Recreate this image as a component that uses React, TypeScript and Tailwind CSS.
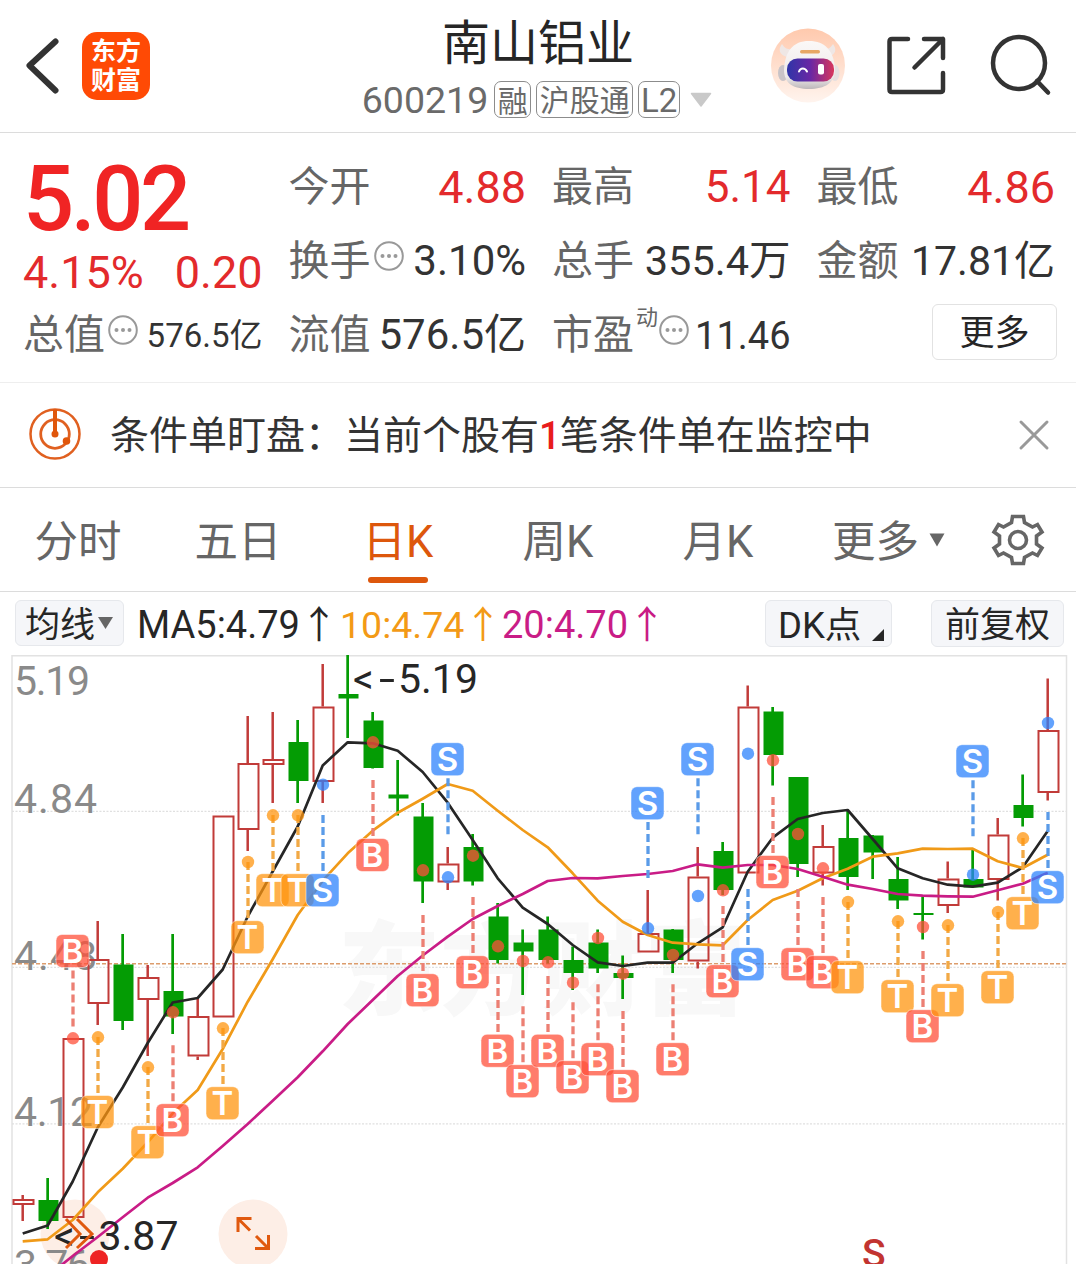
import { useState } from 'react';

const UP = '#c13b39';
const DOWN = '#049c04';

// [direction, high, bodyTop, bodyBottom, low]
type Candle = ['u' | 'd', number, number, number, number];

const candles: Candle[] = [
  ['u', 1195, 1199, 1205, 1221],
  ['d', 1178, 1200, 1221, 1229],
  ['u', 1038, 1038, 1218, 1218],
  ['u', 921, 959, 1004, 1025],
  ['d', 934, 964.5, 1021, 1030],
  ['u', 965, 977, 1000, 1056],
  ['d', 934, 991, 1016.5, 1034],
  ['u', 999, 1016, 1056.5, 1060],
  ['u', 815.5, 815.5, 1017.5, 1017.5],
  ['u', 716, 763, 830, 851],
  ['u', 712, 759, 765, 803],
  ['d', 720, 742, 781, 803],
  ['u', 664, 706.5, 782, 803],
  ['d', 655, 694, 698.5, 738],
  ['d', 712, 720.5, 768, 768.5],
  ['d', 760, 794.5, 798.5, 815.5],
  ['d', 803, 816.5, 881.5, 903],
  ['u', 847, 863.5, 882.5, 890],
  ['d', 834, 847, 881.5, 885.5],
  ['d', 903, 916.5, 960, 963.5],
  ['d', 929.5, 942.5, 951.5, 995],
  ['d', 916.5, 929.5, 960, 963.5],
  ['d', 946.5, 960, 973, 990],
  ['d', 929.5, 942.5, 968.5, 973],
  ['d', 955.5, 973, 978, 999],
  ['u', 890, 933, 952.5, 952.5],
  ['d', 929, 929.5, 960, 973],
  ['u', 847, 876.5, 961.5, 968.5],
  ['d', 842, 851, 890, 895],
  ['u', 685.5, 706.5, 873.5, 873.5],
  ['d', 707, 711.5, 755, 785.5],
  ['d', 777, 777, 864, 877],
  ['u', 825, 846, 873.5, 885.5],
  ['d', 811, 838, 877, 890],
  ['d', 835, 835.5, 852.5, 879],
  ['d', 857, 879, 900.5, 909],
  ['d', 896.5, 913, 915, 939.5],
  ['u', 861.5, 878.5, 906, 913],
  ['d', 849, 879, 887.5, 887.5],
  ['u', 818, 834.5, 880, 900.5],
  ['d', 774.5, 805, 818, 826.5],
  ['u', 678.5, 730, 793, 800.5],
];

const ma5 = [
  1233.5, 1225.5, 1181.5, 1127.5, 1087.5, 1043, 1002.5, 998, 969.5, 916.5, 871.5, 826.5, 765.5, 742.3,
  743.3, 750.7, 772, 802.7, 840, 878.3, 907.7, 924, 945, 962.3, 966, 962.7, 962.7, 943.3, 927.3, 871.7,
  837.7, 819, 813, 810, 839, 868.3, 878.3, 884.7, 886.7, 882.7, 867.3, 831,
];

const ma10 = [
  1241.3, 1239.3, 1220, 1192.3, 1168.7, 1142.3, 1113.3, 1090, 1049, 1001.7, 959.3, 915, 880.7, 853.3,
  830.7, 812.7, 798.7, 784, 790.7, 810.7, 830, 847.3, 873.3, 900.7, 921.7, 935, 942.7, 944.3, 945.3, 920,
  900, 890.7, 878.3, 868.7, 856.7, 853.3, 848.7, 849, 848.7, 861.3, 868, 854.7,
];

const ma20 = [
  1296, 1276, 1256, 1237, 1217.3, 1197.7, 1183, 1167.3, 1146, 1124, 1100.7, 1077.3, 1051.3, 1024, 1000,
  976, 955.5, 936.7, 919, 906, 894, 881, 878, 878.3, 876, 874, 871, 864.3, 867.7, 865, 865, 869, 876.7,
  884.7, 889, 894, 895.7, 896.3, 896.7, 890.3, 883.7, 872.7,
];

// [index, letter, dot y, dashes start y, tag center y]
type Marker = [number, 'B' | 'S' | 'T', number, number, number];

const markers: Marker[] = [
  [2, 'B', 1038.3, 970.5, 951],
  [3, 'T', 1037.3, 1037, 1112],
  [5, 'T', 1067.3, 1067, 1142.2],
  [6, 'B', 1012.3, 1045.3, 1120.2],
  [8, 'T', 1028.3, 1028, 1103.2],
  [9, 'T', 862, 862, 937.2],
  [10, 'T', 815.3, 815, 890.2],
  [11, 'T', 815.3, 815, 890.2],
  [12, 'S', 784.7, 815, 890.2],
  [14, 'B', 742.3, 780, 855],
  [16, 'B', 870.3, 915, 990.2],
  [17, 'S', 877.3, 778.3, 759.2],
  [18, 'B', 855.7, 897, 972.2],
  [19, 'B', 946.3, 976, 1050.8],
  [20, 'B', 961, 1006.3, 1081.2],
  [21, 'B', 962.3, 976, 1050.8],
  [22, 'B', 982.7, 1002.3, 1077.2],
  [23, 'B', 938, 984.3, 1059.2],
  [24, 'B', 973.7, 1011, 1086.2],
  [25, 'S', 928.3, 822, 803.2],
  [26, 'B', 955, 984.3, 1059.2],
  [27, 'S', 896, 778.3, 759.2],
  [28, 'B', 890.3, 906, 981.2],
  [29, 'S', 753.7, 889, 964.2],
  [30, 'B', 760.3, 797, 872],
  [31, 'B', 834, 889, 964.2],
  [32, 'B', 868.3, 897, 972.2],
  [33, 'T', 902, 902, 977.2],
  [35, 'T', 921.3, 921, 996.2],
  [36, 'B', 927, 951, 1026.2],
  [37, 'T', 925.3, 925, 1000.2],
  [38, 'S', 874.7, 780.3, 761.2],
  [39, 'T', 912, 912, 987.2],
  [40, 'T', 838.3, 838, 913.2],
  [41, 'S', 723, 812, 887.2],
];

const markerFill = { B: '#ff503a', S: '#2e83fc', T: '#ff9510' };
const markerDash = { B: '#ec7f73', S: '#5a9be8', T: '#f2a945' };

const xAt = (i: number) => 22.7 + i * 25;
const toPoints = (values: number[]) => values.map((y, i) => `${xAt(i)},${y}`).join(' ');

function MoreDots() {
  return (
    <svg width="30" height="30" viewBox="0 0 30 30" className="-mt-2 ml-[3px] shrink-0">
      <circle cx="15" cy="15" r="13.8" fill="none" stroke="#999" strokeWidth="2" />
      <circle cx="8.5" cy="15" r="2" fill="#999" />
      <circle cx="15" cy="15" r="2" fill="#999" />
      <circle cx="21.5" cy="15" r="2" fill="#999" />
    </svg>
  );
}

function Robot() {
  return (
    <svg width="74" height="76" viewBox="0 0 74 76">
      <defs>
        <linearGradient id="robotBg" x1="0" y1="0" x2="0" y2="1">
          <stop offset="0" stopColor="#ffc9ad" />
          <stop offset="1" stopColor="#fff4ee" />
        </linearGradient>
        <linearGradient id="robotFace" x1="0" y1="0" x2="1" y2="0">
          <stop offset="0" stopColor="#2f35a8" />
          <stop offset="0.5" stopColor="#6a27a4" />
          <stop offset="1" stopColor="#d8365c" />
        </linearGradient>
        <linearGradient id="robotHead" x1="0" y1="0" x2="0" y2="1">
          <stop offset="0" stopColor="#fbf8f7" />
          <stop offset="0.75" stopColor="#eeeaea" />
          <stop offset="1" stopColor="#bdb7ba" />
        </linearGradient>
      </defs>
      <circle cx="37" cy="37.5" r="37" fill="url(#robotBg)" />
      <path d="M11 16c-4 5-3 11 5 13l8-8c-6 1-10 0-13-5zM62 16c4 5 3 11-5 13l-8-8c6 1 10 0 13-5z" fill="#efe7e5" />
      <ellipse cx="12" cy="45" rx="5" ry="8" fill="#c9c3c7" />
      <ellipse cx="64" cy="45" rx="4.5" ry="8" fill="#e6dfe0" />
      <path d="M38 13c16 0 25 10 26 28 0 14-10 20-26 20S13 55 13 42c1-19 9-29 25-29z" fill="url(#robotHead)" />
      <rect x="29" y="22" width="20" height="3.5" rx="1.7" fill="#e8a765" />
      <rect x="16" y="30.5" width="47" height="23" rx="10.5" fill="url(#robotFace)" />
      <path d="M28 43.5c1.5-4 6-4 8 0" fill="none" stroke="#fff" strokeWidth="2" strokeLinecap="round" />
      <rect x="47" y="36" width="6" height="10.5" rx="2" fill="#fff" />
    </svg>
  );
}

function Header() {
  return (
    <header className="flex h-[133px] border-b-[1.5px] border-[#dcdcdc]">
      <div className="flex w-[330px] items-start pt-8 pl-6">
        <svg width="38" height="68" viewBox="24 32 38 68" fill="none" stroke="#333" strokeWidth="6" strokeLinecap="round" strokeLinejoin="round">
          <path d="M55.5 41.5L29.5 65.5L55.500 90.500" />
        </svg>
        <div className="ml-5 flex size-[68px] flex-col items-center justify-center rounded-[15px] bg-[#ff4a05] pb-1 font-['Noto_Sans_CJK_SC',sans-serif] text-[25px] leading-[29px] font-bold text-white">
          <span>东方</span>
          <span>财富</span>
        </div>
      </div>
      <div className="flex flex-1 flex-col items-center">
        <h1 className="mt-[19px] h-[50px] text-[48px] leading-[50px] whitespace-nowrap text-[#262626]">南山铝业</h1>
        <div className="mt-3 flex h-[37px] items-center pr-0.5 text-[#6a6a6a]">
          <span className="pt-0.5 text-[37.5px] leading-[37px]">600219</span>
          <span className="ml-1.5 flex h-[37px] w-[37px] items-center justify-center rounded-[7px] border-[1.5px] border-[#8c8c8c] pt-1 text-[30px] leading-none">融</span>
          <span className="ml-[5px] flex h-[37px] w-[97px] items-center justify-center rounded-[7px] border-[1.5px] border-[#8c8c8c] pt-[3px] text-[30px] leading-none">沪股通</span>
          <span className="ml-[5px] flex h-[37px] w-[42px] items-center justify-center rounded-[7px] border-[1.5px] border-[#8c8c8c] pt-0.5 text-[33px] leading-none">L2</span>
          <svg width="22" height="16" viewBox="0 0 22 16" className="ml-2.5">
            <path d="M1.5 1.5h19L11 14z" fill="#c9c9c9" stroke="#c9c9c9" strokeWidth="1.5" strokeLinejoin="round" />
          </svg>
        </div>
      </div>
      <div className="flex w-[330px] items-start pt-7 pl-[25px]">
        <Robot />
        <svg width="62" height="62" viewBox="885 35 62 62" className="ml-10 mt-[7px]" fill="none" stroke="#333" strokeWidth="4.5" strokeLinecap="round" strokeLinejoin="round">
          <path d="M908 39H892Q889.5 39 889.5 41.5V89.5Q889.5 92 892 92H940.5Q943 92 943 89.5V73M924 39H943V58M943 39L914.5 67.5" />
        </svg>
        <svg width="66" height="66" viewBox="987 33 66 66" className="ml-[41px] mt-[5px]" fill="none" stroke="#333" strokeWidth="4.5" strokeLinecap="round">
          <circle cx="1018" cy="63" r="26" />
          <path d="M1036 81L1047 92.500" />
        </svg>
      </div>
    </header>
  );
}

type StatProps = {
  label: string;
  value: string;
  size?: string;
  color?: string;
  dots?: boolean;
};

function Stat({ label, value, size = 'text-[42px]', color = 'text-[#333]', dots }: StatProps) {
  return (
    <div className="flex h-[74px] items-center whitespace-nowrap">
      <span className="pt-[3px] text-[41px] text-[#666]">{label}</span>
      {dots && <MoreDots />}
      <span className={`ml-auto pt-0.5 ${size} ${color}`}>{value}</span>
    </div>
  );
}

function Quote() {
  return (
    <section className="flex h-[250px] gap-[26px] border-b-[1.5px] border-[#eee] pt-4 pr-[21px] pl-[23px] leading-none">
      <div className="w-[240px]">
        <div className="flex h-[98px] items-center pt-1 text-[90px] font-medium tracking-[-3.4px] text-[#f02424]">5.02</div>
        <div className="flex h-[50px] items-center justify-between pt-px text-[45px] text-[#e32a2c]">
          <span>4.15%</span>
          <span>0.20</span>
        </div>
        <Stat label="总值" value="576.5亿" size="text-[33px]" dots />
      </div>
      <div className="w-[238px]">
        <Stat label="今开" value="4.88" size="text-[45px]" color="text-[#e32a2c]" />
        <Stat label="换手" value="3.10%" dots />
        <Stat label="流值" value="576.5亿" />
      </div>
      <div className="w-[239px]">
        <Stat label="最高" value="5.14" size="text-[44px]" color="text-[#e32a2c]" />
        <Stat label="总手" value="355.4万" size="text-[41.5px]" />
        <div className="flex h-[74px] items-center text-[#666]">
          <span className="pt-[3px] text-[41px]">市盈</span>
          <span className="-mt-8 ml-0.5 -mr-0.5 text-[22px]">动</span>
          <MoreDots />
          <span className="ml-auto pt-1 text-[38px] text-[#333]">11.46</span>
        </div>
      </div>
      <div className="w-[239px]">
        <Stat label="最低" value="4.86" size="text-[45px]" color="text-[#e32a2c]" />
        <Stat label="金额" value="17.81亿" size="text-[41px]" />
        <div className="-mr-0.5 flex h-[74px] items-center justify-end">
          <button className="mb-1 h-[56px] w-[125px] rounded-md border-[1.5px] border-[#e2e2e2] pt-[3px] text-[35px] text-[#262626]">更多</button>
        </div>
      </div>
    </section>
  );
}

function Notice({ onClose }: { onClose: () => void }) {
  return (
    <section className="flex h-[105px] items-center border-b-[1.5px] border-[#dcdcdc] pr-[26px] pl-[28px]">
      <svg width="54" height="54" viewBox="0 0 54 54" fill="none" stroke="#e06020" className="mb-0.5">
        <circle cx="27" cy="27" r="24.500" strokeWidth="2.5" />
        <circle cx="27" cy="27" r="14.3" strokeWidth="2.8" />
        <path d="M27 2.500V27" stroke="#e0560b" strokeWidth="4" />
        <circle cx="27" cy="27" r="3.5" fill="#e0560b" stroke="none" />
        <circle cx="38.5" cy="34" r="3.8" fill="#e0560b" stroke="none" />
      </svg>
      <p className="ml-[28px] pt-[3px] text-[39px] leading-none whitespace-nowrap text-[#333]">
        条件单盯盘：当前个股有<span className="text-[38px] font-medium tracking-[-1px] text-[#e81c1c]">1</span>笔条件单在监控中
      </p>
      <button onClick={onClose} className="ml-auto">
        <svg width="32" height="32" viewBox="0 0 32 32" stroke="#999" strokeWidth="3" strokeLinecap="round">
          <path d="M3 3L29 29M29 3L3 29" />
        </svg>
      </button>
    </section>
  );
}

const tabs = ['分时', '五日', '日K', '周K', '月K'];

function Tabs() {
  const [active, setActive] = useState('日K');

  return (
    <nav className="flex h-[104px] border-b-[1.5px] border-[#dcdcdc] text-[43.5px] leading-none text-[#666]">
      {tabs.map((tab) => (
        <button
          key={tab}
          onClick={() => setActive(tab)}
          className={`relative w-[160px] pt-1.5 whitespace-nowrap first:ml-[-2px] ${tab === active ? 'text-[#dd570c]' : ''}`}
        >
          {tab}
          {tab === active && <span className="absolute bottom-2 left-1/2 h-[6px] w-[60px] -translate-x-1/2 rounded-full bg-[#dd570c]" />}
        </button>
      ))}
      <button className="ml-[34px] flex items-center pt-1.5 whitespace-nowrap">
        更多
        <svg width="16" height="14" viewBox="0 0 16 14" className="mb-1.5 ml-2.5">
          <path d="M0.5 0.5h15L8 13.500z" fill="#666" />
        </svg>
      </button>
      <button className="mr-[31px] ml-auto pt-px">
        <svg width="54" height="54" viewBox="-27 -27 54 54" fill="none" stroke="#666" strokeWidth="3.6">
          <path d="M-5.5 -23.500H5.5L6.500 -17.500L14.500 -13L19.500 -15.500L24 -8L18.500 -4V4L24 8L19.500 15.500L14.500 13L6.500 17.500L5.500 23.500H-5.500L-6.500 17.500L-14.500 13L-19.500 15.500L-24 8L-18.500 4V-4L-24 -8L-19.500 -15.500L-14.500 -13L-6.500 -17.500Z" />
          <circle r="8.5" />
        </svg>
      </button>
    </nav>
  );
}

function MaBar() {
  return (
    <div className="flex h-[63px] items-start pt-2 pr-[12px] pl-[15px] text-[38px] leading-[46px] whitespace-nowrap">
      <button className="flex h-[46px] w-[109px] items-center rounded-md border-[1.5px] border-[#e6e8ec] bg-[#f5f6f9] pl-[9px] text-[35px] text-[#262626]">
        <span className="pt-[5px]">均线</span>
        <svg width="15" height="12" viewBox="0 0 15 12" className="ml-[3px]">
          <path d="M0 0h15L7.5 12z" fill="#666" />
        </svg>
      </button>
      <span className="ml-[13px] w-[203px] pt-[2px] text-[#262626]">MA5:4.79↑</span>
      <span className="w-[162px] pt-[2px] text-[37.5px] text-[#f39a16]">10:4.74↑</span>
      <span className="pt-[2px] text-[#c91c86]">20:4.70↑</span>
      <button className="ml-auto flex h-[47px] w-[127px] rounded-md border-[1.5px] border-[#e6e8ec] bg-[#f5f6f9] pt-0.5 pl-3 text-[36.5px] leading-[46px] text-[#262626]">
        <span>DK点</span>
        <svg width="12" height="12" viewBox="0 0 12 12" className="mt-[26px] ml-[11px]">
          <path d="M12 0V12H0z" fill="#262626" />
        </svg>
      </button>
      <button className="ml-[39px] h-[47px] w-[133px] rounded-md border-[1.5px] border-[#e6e8ec] bg-[#f5f6f9] pt-[5px] text-[35px] leading-[40px] text-[#262626]">前复权</button>
    </div>
  );
}

const axis = [
  { text: '5.19', y: 695, width: 75 },
  { text: '4.84', y: 813, width: 82 },
  { text: '4.48', y: 970, width: 82 },
  { text: '4.12', y: 1126, width: 78 },
  { text: '3.76', y: 1278.5, width: 75 },
];

function Chart() {
  return (
    <svg width="1076" height="609" viewBox="0 655 1076 609" className="block">
      <text x="338" y="1007" fontSize="102" fontWeight="900" fill="#f8f8f8" textLength="408" className="font-['Noto_Sans_CJK_SC',sans-serif]">东方财富</text>

      {/* frame and grid */}
      <path d="M12 1264V655.8H1066.5V1264" fill="none" stroke="#e2e2e2" strokeWidth="1.5" />
      {[811.3, 967.3, 1123.8].map((y) => (
        <path key={y} d={`M12 ${y}H1066`} stroke="#e0e0e0" strokeWidth="1.2" strokeDasharray="2 1.5" />
      ))}
      <path d="M12 963.8H1066" stroke="#dc9c6c" strokeWidth="1.5" strokeDasharray="4 2" />

      <circle cx="75" cy="1234" r="34.5" fill="#fdeee6" />
      <circle cx="253" cy="1234" r="34.5" fill="#fdeee6" />

      {axis.map((a) => (
        <text key={a.text} x="14" y={a.y} fontSize="41" fill="#8a8a8a" textLength={a.width + 1}>{a.text}</text>
      ))}

      {candles.map(([dir, high, top, bottom, low], i) => {
        const x = xAt(i);
        return dir === 'u' ? (
          <g key={i} stroke={UP} strokeWidth="2" fill="none">
            <path d={`M${x} ${high}V${top}M${x} ${bottom}V${low}`} strokeWidth="2.5" />
            <rect x={x - 9.2} y={top + 1} width="20" height={bottom - top - 2} />
          </g>
        ) : (
          <g key={i} fill={DOWN}>
            <rect x={x - 1.4} y={high} width="2.7" height={low - high} />
            <rect x={x - 9.2} y={top} width="20" height={bottom - top} />
          </g>
        );
      })}

      <g fill="none" strokeWidth="2.7" strokeLinejoin="round">
        <polyline points={toPoints(ma5)} stroke="#262626" />
        <polyline points={toPoints(ma10)} stroke="#f09a18" />
        <polyline points={toPoints(ma20)} stroke="#c91c86" />
      </g>

      {/* highest and lowest price callouts */}
      <text y="693" fontSize="41" fill="#262626">
        <tspan x="353">&lt;</tspan><tspan x="379" textLength="16" lengthAdjust="spacingAndGlyphs">-</tspan><tspan x="398">5.19</tspan>
      </text>
      <text y="1250" fontSize="41" fill="#262626">
        <tspan x="54">&lt;</tspan><tspan x="79" textLength="16" lengthAdjust="spacingAndGlyphs">-</tspan><tspan x="98.500">3.87</tspan>
      </text>

      {markers.map(([i, letter, dot, dash, tag]) => (
        <g key={i}>
          <path d={`M${xAt(i) + 0.3} ${dash}v56`} stroke={markerDash[letter]} strokeWidth="3.3" strokeDasharray="8 4" />
          <circle cx={xAt(i) + 0.3} cy={dot} r="6.2" fill={markerFill[letter]} fillOpacity="0.75" />
          <rect x={xAt(i) - 16.7} y={tag - 16.5} width="33" height="33" rx="6" fill={markerFill[letter]} fillOpacity="0.75" stroke="#fff" strokeOpacity="0.5" />
          <text x={xAt(i) - 0.2} y={tag + 12} fontSize="33" fontWeight="600" fill="#fff" textAnchor="middle" className="font-['Inter',sans-serif]">{letter}</text>
        </g>
      ))}

      <g fill="none" stroke="#e0590f" strokeWidth="3">
        <path d="M66 1219L80 1234L66 1248M77 1219L92 1234L77 1248" />
        <path d="M238 1232V1218.5H251.5M238 1218.5L250 1230.5M268.5 1235V1248.5H255M268.5 1248.5L256 1236" />
      </g>
      <circle cx="99" cy="1259" r="9" fill="#ee2323" />
      <text x="862" y="1267" fontSize="39" fontWeight="500" fill="#c23430">S</text>
    </svg>
  );
}

export default function App() {
  const [showNotice, setShowNotice] = useState(true);

  return (
    <div className="h-[1264px] w-[1076px] overflow-hidden bg-white font-['Roboto','Noto_Sans_CJK_SC',sans-serif]">
      <Header />
      <Quote />
      {showNotice && <Notice onClose={() => setShowNotice(false)} />}
      <Tabs />
      <MaBar />
      <Chart />
    </div>
  );
}
